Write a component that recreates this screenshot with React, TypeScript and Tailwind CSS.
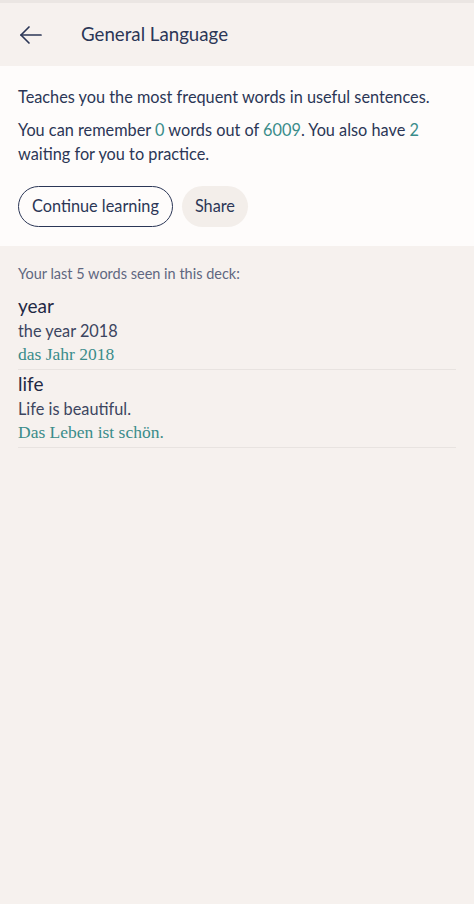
const words = [
  { word: "year", sentence: "the year 2018", translation: "das Jahr 2018" },
  { word: "life", sentence: "Life is beautiful.", translation: "Das Leben ist schön." },
];

function BackArrow() {
  return (
    <svg width="24" height="24" viewBox="0 0 24 24" fill="none" stroke="#2b3656" strokeWidth="1.7" strokeLinecap="round" strokeLinejoin="round">
      <path d="M22 12H2" />
      <path d="M10 4l-8 8 8 8" />
    </svg>
  );
}

export default function App() {
  return (
    <div className="min-h-[904px] w-[474px] bg-[#f6f1ee] font-['Lato',sans-serif] text-[#2b3656]">
      <div className="h-[3px] bg-[#ebe6e3]" />
      <header className="flex h-[63px] items-center bg-[#f6f1ee] shadow-[0_1px_1px_rgba(0,0,0,0.08)]">
        <div className="ml-[19px] flex w-[62px] items-center">
          <BackArrow />
        </div>
        <h1 className="text-[18.7px] text-[#2b3656]">General Language</h1>
      </header>

      <section className="bg-[#fefcfb] px-[18px] pb-[19px] pt-[19px]">
        <p className="text-[16.3px] leading-[24px]">Teaches you the most frequent words in useful sentences.</p>
        <p className="mt-[9px] text-[16.3px] leading-[24px]">
          You can remember <span className="text-[#3a8c8a]">0</span> words out of{" "}
          <span className="text-[#3a8c8a]">6009</span>. You also have <span className="text-[#3a8c8a]">2</span>
          <br />
          waiting for you to practice.
        </p>
        <div className="mt-[20px] flex gap-[9px]">
          <button className="h-[41px] rounded-full border-[1.5px] border-[#2b3656] px-[13px] text-[16.3px]">
            Continue learning
          </button>
          <button className="h-[41px] rounded-full bg-[#f3eeea] px-[13px] text-[16.3px]">Share</button>
        </div>
      </section>

      <section className="px-[18px] pt-[18px]">
        <p className="text-[14.5px] leading-[20px] text-[#5f6780]">Your last 5 words seen in this deck:</p>
        <ul className="mt-[8px]">
          {words.map((w) => (
            <li key={w.word} className="border-b border-[#e8e3e0] pb-[4px]">
              <p className="text-[19px] leading-[27px] text-[#1f2945]">{w.word}</p>
              <p className="text-[16.3px] leading-[24px] text-[#3c4560]">{w.sentence}</p>
              <p className="font-['Liberation_Serif',serif] text-[17.5px] leading-[22px] text-[#3a8c8a]">{w.translation}</p>
            </li>
          ))}
        </ul>
      </section>
    </div>
  );
}
